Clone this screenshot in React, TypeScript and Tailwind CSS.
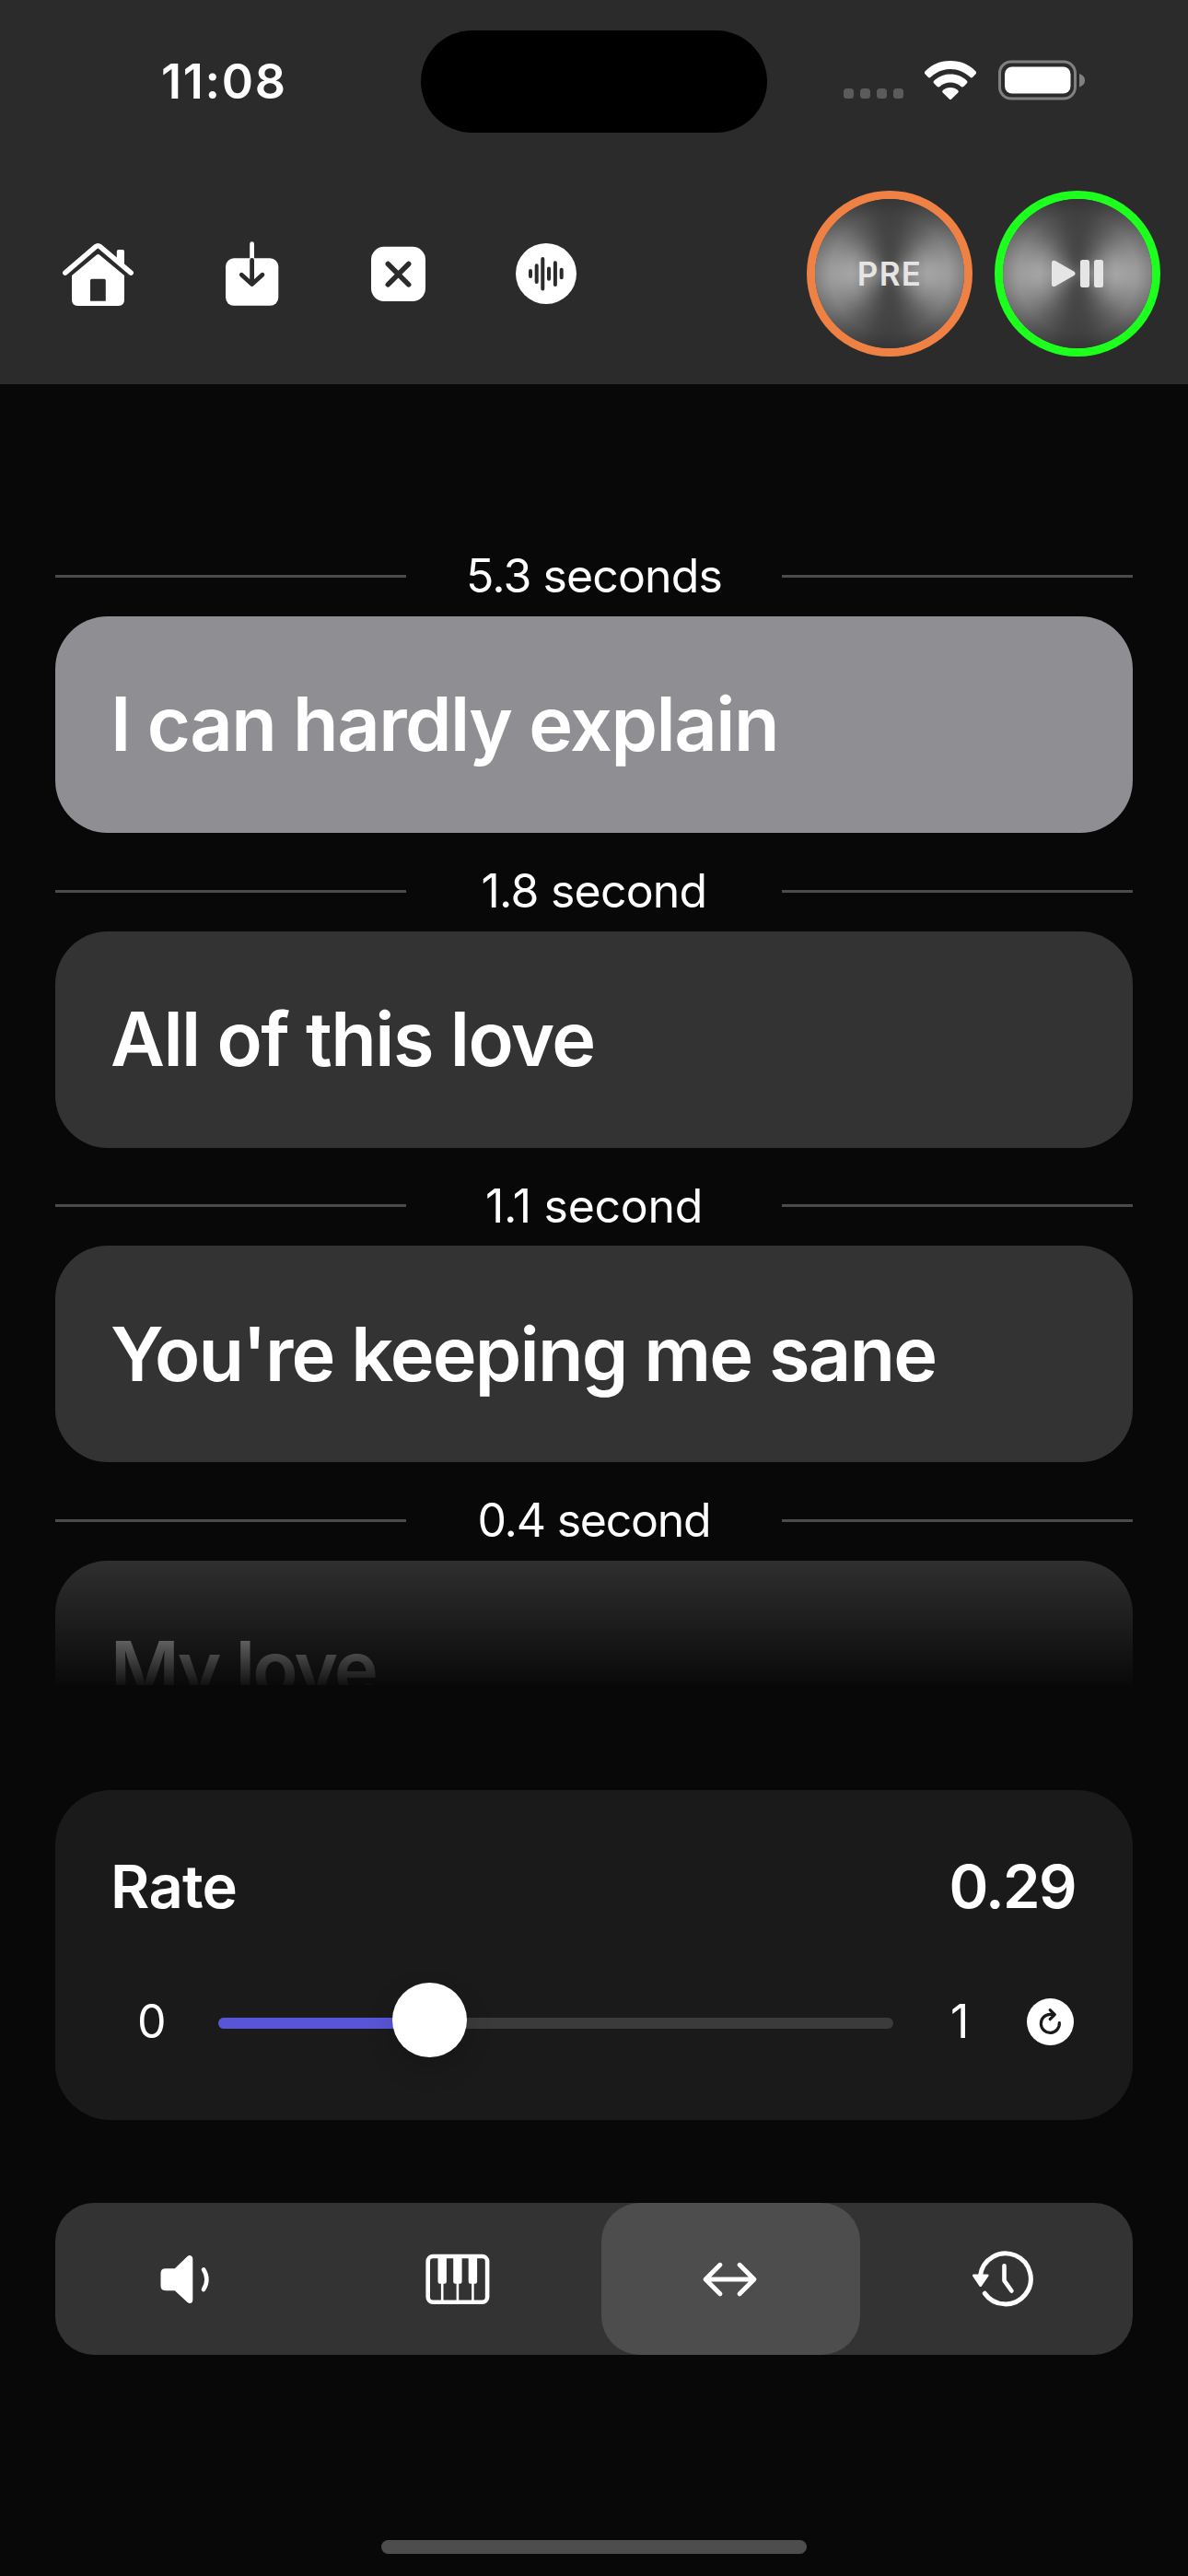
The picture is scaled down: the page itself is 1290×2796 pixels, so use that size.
import type { ReactNode } from "react";

const lyrics = [
  { gap: "5.3 seconds", gapTracking: "tracking-[-0.9px]", text: "I can hardly explain", tracking: "tracking-[-1.53px]", active: true },
  { gap: "1.8 second", gapTracking: "tracking-[-0.8px]", text: "All of this love", tracking: "tracking-[-1.55px]", active: false },
  { gap: "1.1 second", gapTracking: "tracking-[-0.3px]", text: "You're keeping me sane", tracking: "tracking-[-1.8px]", active: false },
  { gap: "0.4 second", gapTracking: "tracking-[-1.25px]", text: "My love", tracking: "tracking-[-2.6px]", active: false },
];

function StatusBar() {
  return (
    <div className="flex h-[177px] items-center">
      <div className="w-[457px] pl-[175px] text-[52px] leading-none font-semibold tracking-[1.75px]">11:08</div>
      <div className="h-[111px] w-[376px] rounded-full bg-black" />
      <div className="mb-[3px] ml-[83px] flex items-center">
        <div className="mt-[29px] flex gap-[7px]">
          {[0, 1, 2, 3].map((i) => (
            <span key={i} className="h-[11px] w-[11px] rounded-[3.5px] bg-[#5b5b5b]" />
          ))}
        </div>
        <svg className="ml-[22px] h-[44px] w-[58px]" viewBox="0 0 58 44" fill="#fff">
          <path d="M29 1C40 1 49 4.800 56.300 12.200Q57.800 13.800 56.500 15.300L53 19Q51.800 20 50.500 18.800C44 13 37 10 29 10S14 13 7.500 18.800Q6.200 20 5 19L1.500 15.300Q.2 13.800 1.700 12.200C9 4.800 18 1 29 1Z" />
          <path d="M29 15.600C36 15.600 42 18.200 46.700 22.500Q48.200 24 46.800 25.500L43.300 29Q42 30 40.700 28.900C37.200 25.900 33.500 24.400 29 24.400S20.800 25.900 17.300 28.900Q16 30 14.700 29L11.200 25.500Q9.800 24 11.300 22.500C16 18.200 22 15.600 29 15.600Z" />
          <path d="M29 30C32.200 30 35 31.100 37.200 32.900Q38.500 34.100 37.300 35.400L30.200 42.400Q29 43.500 27.800 42.400L20.700 35.400Q19.500 34.100 20.800 32.900C23 31.100 25.800 30 29 30Z" />
        </svg>
        <svg className="ml-[23px] h-[44px] w-[96px]" viewBox="0 0 96 44" fill="none">
          <rect x="1.500" y="2" width="82" height="40" rx="12.500" stroke="#808080" strokeWidth="3" />
          <rect x="7" y="7.500" width="71.500" height="29" rx="8" fill="#fff" />
          <path d="M88 15C92.300 16.600 94 19 94 22.200S92.300 27.800 88 29.400Z" fill="#808080" />
        </svg>
      </div>
    </div>
  );
}

function Knob({ ring, children }: { ring: string; children: ReactNode }) {
  return (
    <button className={`relative flex h-[180px] w-[180px] items-center justify-center overflow-hidden rounded-full border-[9px] ${ring}`}>
      <span className="absolute -inset-[16px] rounded-full bg-[conic-gradient(from_0deg,#434343_0deg,#484848_14deg,#606060_35deg,#8a8a8a_60deg,#a2a2a2_80deg,#a6a6a6_90deg,#a2a2a2_100deg,#8a8a8a_120deg,#606060_145deg,#484848_166deg,#434343_180deg,#484848_194deg,#606060_215deg,#8a8a8a_240deg,#a2a2a2_260deg,#a6a6a6_270deg,#a2a2a2_280deg,#8a8a8a_300deg,#606060_325deg,#484848_346deg,#434343_360deg)] blur-[5px]" />
      <span className="absolute inset-0 rounded-full bg-[radial-gradient(closest-side,rgba(74,74,74,0.5)_0%,rgba(74,74,74,0.36)_15%,rgba(74,74,74,0.12)_36%,transparent_52%,rgba(0,0,0,0.06)_80%,rgba(0,0,0,0.22)_100%)]" />
      <span className="relative flex text-[#e5e5e5]">{children}</span>
    </button>
  );
}

function Toolbar() {
  return (
    <div className="flex h-[240px] items-center pr-[30px] pl-[68px]">
      <svg className="h-[80px] w-[78px]" viewBox="68 257 78 80" fill="#fff">
        <path d="M70.800 296.200 104 267.700Q106.300 265.800 108.600 267.700L142.200 296.200" fill="none" stroke="#fff" strokeWidth="5.500" strokeLinecap="round" strokeLinejoin="round" />
        <path d="M126.800 284V273Q126.800 271 128.800 271H133Q135 271 135 273V290Z" />
        <path fillRule="evenodd" d="M78 299 104.800 276.800Q106.500 275.400 108.200 276.800L135 299V325.500Q135 332 128.500 332H84.500Q78 332 78 325.500ZM98 326.800H114.800V304.500Q114.800 302.800 113.100 302.800H99.700Q98 302.800 98 304.500Z" />
      </svg>
      <svg className="ml-[98px] h-[80px] w-[60px]" viewBox="244 257 60 80" fill="none" strokeWidth="4.800" strokeLinecap="round" strokeLinejoin="round">
        <path d="M273.600 264.700V280" stroke="#fff" />
        <rect x="245" y="280.300" width="57.300" height="51.500" rx="9" fill="#fff" />
        <path d="M273.600 282.500V308M262.300 298.200 273.600 308.500 284.900 298.200" stroke="#2b2b2b" />
      </svg>
      <svg className="ml-[99px] h-[60px] w-[60px]" viewBox="403 267 60 60" fill="none">
        <rect x="403" y="267.800" width="59" height="59.200" rx="14" fill="#fff" />
        <path d="M421.300 286.500 443.700 308.900M443.700 286.500 421.300 308.900" stroke="#2b2b2b" strokeWidth="5.500" strokeLinecap="round" />
      </svg>
      <svg className="ml-[97px] h-[66px] w-[66px]" viewBox="560 264 66 66" fill="none">
        <circle cx="593" cy="297" r="33" fill="#fff" />
        <path d="M576 294V300M582.700 288.300V306M589.300 281V313.600M596 291.500V302.800M602.900 285.200V309M609.700 292.700V301.300" stroke="#2b2b2b" strokeWidth="4" strokeLinecap="round" />
      </svg>
      <div className="ml-auto flex gap-[24px]">
        <Knob ring="border-[#f08145]">
          <span className="text-[35px] leading-none font-semibold tracking-[1.3px]">PRE</span>
        </Knob>
        <Knob ring="border-[#1dff1d]">
          <svg className="h-[30px] w-[56px]" viewBox="0 0 56 30" fill="currentColor">
            <path d="M0 3.200C0 .9 2.200.2 4.200 1.300L24.300 12.700Q26.800 14.800 24.300 17L4.200 28.600C2.200 29.700 0 29 0 26.700Z" />
            <rect x="31" y="0" width="10" height="30" rx="2.500" />
            <rect x="46" y="0" width="10" height="30" rx="2.500" />
          </svg>
        </Knob>
      </div>
    </div>
  );
}

function Lyrics() {
  return (
    <div className="h-[1412px] overflow-hidden px-[60px] pt-[145.33px] [mask-image:linear-gradient(to_bottom,#000_1266px,transparent_1418px)]">
      {lyrics.map((l) => (
        <div key={l.gap} className="h-[341.67px] pt-[19.67px]">
          <div className="flex h-[87px] items-center">
            <div className="h-[3px] w-[381px] bg-[#4b4b4b]" />
            <div className={`flex-1 text-center text-[50px] leading-none ${l.gapTracking}`}>{l.gap}</div>
            <div className="h-[3px] w-[381px] bg-[#4b4b4b]" />
          </div>
          <div className={`flex h-[235px] items-center rounded-[57px] px-[60px] pt-[1px] text-[81px] leading-none font-semibold ${l.tracking} ${l.active ? "bg-[#8e8e93]" : "bg-[#333333]"}`}>
            {l.text}
          </div>
        </div>
      ))}
    </div>
  );
}

function RatePanel() {
  return (
    <div className="mx-[60px] mt-[114px] h-[358px] rounded-[60px] bg-[#1a1a1a] px-[60px] pt-[72px]">
      <div className="flex h-[65px] items-center justify-between text-[65px] leading-none font-semibold">
        <span className="tracking-[-0.7px]">Rate</span>
        <span className="pr-[2px] tracking-[-1.6px]">0.29</span>
      </div>
      <div className="mt-[73px] flex h-[82px] items-center pl-[29px] text-[50px] leading-none">
        <span className="w-[88px]">0</span>
        <div className="relative mt-[4px] h-[12px] w-[733px] rounded-full bg-[#3b3b3c]">
          <div className="h-full w-[31.2%] rounded-full bg-[#5856d6]" />
          <div className="absolute top-[-38px] left-[189px] h-[81px] w-[81px] rounded-full bg-white shadow-[0_12px_30px_rgba(0,0,0,0.16)]" />
        </div>
        <span className="w-[145px] pl-[62px]">1</span>
        <svg className="h-[51px] w-[51px]" viewBox="0 0 51 51" fill="none">
          <circle cx="25.500" cy="25.500" r="25.500" fill="#fff" />
          <path d="M35.300 26.500A10 10 0 1 1 25.300 17.400H29.500M25.200 12.600 30.300 17.600 25.200 22.700" stroke="#1a1a1a" strokeWidth="3.200" strokeLinecap="round" strokeLinejoin="round" />
        </svg>
      </div>
    </div>
  );
}

function Tab({ active = false, children }: { active?: boolean; children: ReactNode }) {
  return (
    <button className={`flex h-[165px] w-[281px] items-center justify-center rounded-[42px] ${active ? "bg-[#4d4d4d]" : ""}`}>{children}</button>
  );
}

function TabBar() {
  return (
    <div className="mx-[60px] mt-[90px] flex h-[165px] justify-between rounded-[42px] bg-[#333333]">
      <Tab>
        <svg className="h-[60px] w-[72px]" viewBox="164.500 2444 72 60" fill="#fff">
          <path d="M174 2467.500Q174 2462.300 179.200 2462.300H189.300L202.800 2449.300Q204.500 2447.800 206.500 2448.200 208.800 2449 208.800 2451.500V2496.500Q208.800 2499.400 206.300 2500 204.500 2500.200 202.800 2498.800L189.300 2486.200H179.200Q174 2486.200 174 2481Z" />
          <path d="M220.500 2463.300Q223.900 2468.500 223.900 2474.200T220.500 2485" fill="none" stroke="#fff" strokeWidth="4.600" strokeLinecap="round" />
        </svg>
      </Tab>
      <Tab>
        <svg className="h-[60px] w-[72px]" viewBox="460.800 2444 72 60" fill="none">
          <rect x="464.500" y="2449" width="64.400" height="49.800" rx="5.500" stroke="#fff" strokeWidth="4.600" />
          <path d="M480 2476V2498M496.700 2476V2498M513.200 2476V2498" stroke="#fff" strokeWidth="2.600" />
          <path d="M475.300 2450H484.700V2476.500Q484.700 2478.700 482.500 2478.700H477.500Q475.300 2478.700 475.300 2476.500ZM492 2450H501.400V2476.500Q501.400 2478.700 499.200 2478.700H494.200Q492 2478.700 492 2476.500ZM508.500 2450H517.900V2476.500Q517.900 2478.700 515.700 2478.700H510.700Q508.500 2478.700 508.500 2476.500Z" fill="#fff" />
        </svg>
      </Tab>
      <Tab active>
        <svg className="h-[60px] w-[72px]" viewBox="757.500 2444 72 60" fill="none" stroke="#fff" strokeWidth="5" strokeLinecap="round" strokeLinejoin="round">
          <path d="M767 2474H819M782.400 2458.300 766.600 2474 782.400 2489.700M803.600 2458.300 819.400 2474 803.600 2489.700" />
        </svg>
      </Tab>
      <Tab>
        <svg className="h-[64px] w-[72px]" viewBox="1053.500 2442 72 64" fill="none" stroke="#fff" strokeLinecap="round" strokeLinejoin="round">
          <path d="M1065 2470A27.500 27.500 0 1 1 1069.800 2489.200" strokeWidth="5" />
          <path d="M1057.800 2469.800H1072.700L1065.200 2480.600Z" fill="#fff" strokeWidth="2.800" />
          <path d="M1091 2459.300V2475.300L1098.900 2486.500" strokeWidth="4.600" />
        </svg>
      </Tab>
    </div>
  );
}

export default function App() {
  return (
    <div className="flex h-[2796px] w-[1290px] flex-col overflow-hidden bg-[#080808] font-['Inter',sans-serif] whitespace-nowrap text-white">
      <header className="h-[417px] bg-[#2b2b2b]">
        <StatusBar />
        <Toolbar />
      </header>
      <Lyrics />
      <RatePanel />
      <TabBar />
      <div className="mx-auto mt-[201px] h-[15px] w-[462px] rounded-full bg-[#4d4d4d]" />
    </div>
  );
}
